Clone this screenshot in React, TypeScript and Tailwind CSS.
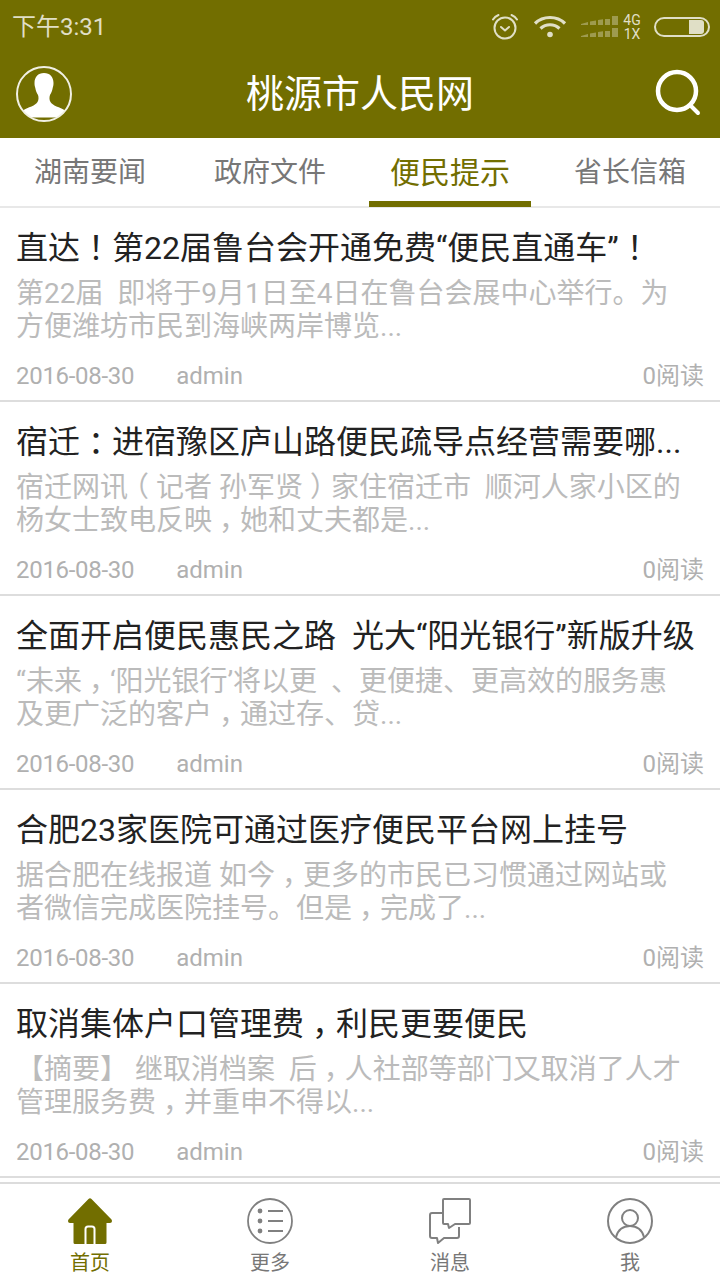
import React from "react";

type Article = {
  title: string;
  lines: string[];
};

const ARTICLES: Article[] = [
  {
    title: "直达！第22届鲁台会开通免费“便民直通车”！",
    lines: ["第22届  即将于9月1日至4日在鲁台会展中心举行。为", "方便潍坊市民到海峡两岸博览..."],
  },
  {
    title: "宿迁：进宿豫区庐山路便民疏导点经营需要哪...",
    lines: ["宿迁网讯（记者 孙军贤）家住宿迁市  顺河人家小区的", "杨女士致电反映，她和丈夫都是..."],
  },
  {
    title: "全面开启便民惠民之路  光大“阳光银行”新版升级",
    lines: ["“未来，‘阳光银行’将以更  、更便捷、更高效的服务惠", "及更广泛的客户，通过存、贷..."],
  },
  {
    title: "合肥23家医院可通过医疗便民平台网上挂号",
    lines: ["据合肥在线报道 如今，更多的市民已习惯通过网站或", "者微信完成医院挂号。但是，完成了..."],
  },
  {
    title: "取消集体户口管理费，利民更要便民",
    lines: ["【摘要】 继取消档案  后，人社部等部门又取消了人才", "管理服务费，并重申不得以..."],
  },
];

const TABS = ["湖南要闻", "政府文件", "便民提示", "省长信箱"];

// the reference centres this punctuation in its cell, the installed font does not
const Punctuated = ({ text }: { text: string }) => (
  <>
    {text.split(/([！：，（）])/).map((part, i) =>
      /^[！：，（）]$/.test(part) ? (
        <span key={i} className="inline-block w-[1em] text-center [font-feature-settings:'halt']">
          {part}
        </span>
      ) : (
        part
      )
    )}
  </>
);

const StatusBar = () => (
  <div className="flex h-[54px] items-center justify-between pl-3 pr-[10px] text-[#e0dfc6]">
    <span className="text-[24px] leading-none">下午3:31</span>
    <div className="flex items-center">
      <svg width="28" height="28" viewBox="0 0 28 28" fill="none" stroke="currentColor" strokeWidth="2" strokeLinecap="round" strokeLinejoin="round">
        <circle cx="14" cy="15" r="10.5" />
        <path d="M10 14l4 3.5 4-3.5" />
        <path d="M2 6.5C3.5 4 5 3 7.5 2M26 6.5C24.500 4 23 3 20.500 2" />
      </svg>
      <svg className="ml-[14px]" width="34" height="26" viewBox="0 0 34 26" fill="none" stroke="currentColor" strokeWidth="3.2">
        <path d="M2 9.500C10 1.500 24 1.500 32 9.500" />
        <path d="M7.500 14.500C13 9.500 21 9.500 26.500 14.500" />
        <circle cx="17" cy="20.500" r="2.800" fill="currentColor" stroke="none" />
      </svg>
      <svg className="ml-[14px] opacity-40" width="37" height="24" viewBox="0 0 37 24" fill="currentColor">
        <path d="M0 9l7-2v3H0zM9 6.500l6-1V10H9zM17 5l5-.7V10h-5zM24 4h5v6h-5zM31 1h6v9h-6zM0 21l7-2v3H0zM9 18.500l6-1V22H9zM17 17l5-.7V22h-5zM24 16h5v6h-5zM31 13h6v9h-6z" />
      </svg>
      <div className="ml-[4px] flex w-[20px] flex-col items-center text-[14px] leading-[14px]">
        <span>4G</span>
        <span>1X</span>
      </div>
      <div className="ml-[12px] flex h-5 w-14 items-center justify-end rounded-full border-2 border-current pr-1">
        <div className="h-[14px] w-[15px] rounded-r-[3px] bg-current" />
      </div>
    </div>
  </div>
);

const Header = () => (
  <div className="flex h-[84px] items-center px-[15px] text-white">
    <div className="w-[58px]">
      <svg className="mb-[4px]" width="58" height="58" viewBox="0 0 58 58">
        <defs>
          <clipPath id="avatarClip">
            <circle cx="29" cy="29" r="27" />
          </clipPath>
        </defs>
        <g clipPath="url(#avatarClip)" fill="#fff">
          <path d="M29 8c-6 0-9.500 4-9.500 10 0 2 .3 3.500.8 5 .4 2.500 1.200 4.500 2.700 7 .8 2.500.7 5-.5 7-1 1.500-3 3-6 4.500-3 1-6 2-8.500 4-2 1.500-3 3-3 7h48c0-4-1-5.500-3-7-2.500-2-5.500-3-8.500-4-3-1.500-5-3-6-4.500-1.200-2-1.300-4.500-.5-7 1.500-2.500 2.300-4.500 2.700-7 .5-1.500.8-3 .8-5 0-6-3.500-10-9.500-10z" />
        </g>
        <circle cx="29" cy="29" r="27" fill="none" stroke="#f1f0e4" strokeWidth="2" />
      </svg>
    </div>
    <h1 className="mb-[4px] flex-1 text-center text-[38px] font-normal leading-none">桃源市人民网</h1>
    <div className="flex w-[58px] justify-start">
      <svg className="mb-[6px] ml-[6px]" width="52" height="52" viewBox="0 0 52 52" fill="none" stroke="#fff" strokeLinecap="round">
        <circle cx="24" cy="24" r="19" strokeWidth="4.500" />
        <path d="M38 39l7 7" strokeWidth="4" />
      </svg>
    </div>
  </div>
);

const Tabs = () => (
  <div className="grid h-[70px] grid-cols-4 border-b-2 border-[#e8e8e8]">
    {TABS.map((tab, i) => (
      <div key={tab} className="flex justify-center">
        <div
          className={
            i === 2
              ? "mb-[-1px] flex w-[162px] justify-center border-b-[6px] border-[#726e00] pt-[15px] text-[30px] leading-[40px] text-[#726e00]"
              : "flex justify-center pt-[15px] text-[28px] leading-[40px] text-[#777]"
          }
        >
          {tab}
        </div>
      </div>
    ))}
  </div>
);

const ArticleRow = ({ article }: { article: Article }) => (
  <div className="h-[194px] border-b-2 border-[#dddddd] pl-4 pr-4 pt-[20px]">
    <div className="whitespace-pre text-[32px] leading-[40px] text-[#222]">
      <Punctuated text={article.title} />
    </div>
    <div className="mt-[9px] text-[28px] leading-[33px] text-[#bbb]">
      {article.lines.map((line) => (
        <div key={line} className="whitespace-pre">
          <Punctuated text={line} />
        </div>
      ))}
    </div>
    <div className="mt-[16px] flex items-center text-[24px] leading-[34px] text-[#b0b0b0]">
      <span className="tracking-[-0.3px]">2016-08-30</span>
      <span className="ml-[42px]">admin</span>
      <span className="ml-auto">0阅读</span>
    </div>
  </div>
);

const NavItem = ({ label, active, children }: { label: string; active?: boolean; children: React.ReactNode }) => (
  <div className="flex flex-col items-center pt-[14px]">
    <div className="flex h-[46px] items-center">{children}</div>
    <span className={active ? "mt-[7px] text-[20px] leading-[24px] text-[#726e00]" : "mt-[7px] text-[20px] leading-[24px] text-[#777]"}>
      {label}
    </span>
  </div>
);

const BottomNav = () => (
  <div className="absolute bottom-0 left-0 grid h-[98px] w-full grid-cols-4 border-t-2 border-[#dcdcdc] bg-white">
    <NavItem label="首页" active>
      <svg width="46" height="46" viewBox="0 0 46 46" fill="#726e00">
        <path d="M21.500 1a2 2 0 0 1 3 0L44.500 21.500C45.500 23 44.800 25 43 25H39.500V44.500A1.500 1.500 0 0 1 38 46H8A1.500 1.500 0 0 1 6.500 44.500V25H3C1.200 25 .5 23 1.500 21.500z" />
        <path d="M18.500 46V31a2.500 2.500 0 0 1 2.500-2.500h4a2.500 2.500 0 0 1 2.500 2.500V46" fill="none" stroke="#fff" strokeWidth="2" />
      </svg>
    </NavItem>
    <NavItem label="更多">
      <svg width="46" height="46" viewBox="0 0 46 46" fill="none" stroke="#808080" strokeWidth="1.800">
        <circle cx="23" cy="23" r="22" />
        <path d="M21 13h15M21 23h15M21 33h15" />
        <circle cx="13" cy="13" r="1.500" fill="#808080" />
        <circle cx="13" cy="23" r="1.500" fill="#808080" />
        <circle cx="13" cy="33" r="1.500" fill="#808080" />
      </svg>
    </NavItem>
    <NavItem label="消息">
      <svg width="42" height="46" viewBox="0 0 42 46" fill="none" stroke="#808080" strokeWidth="2" strokeLinejoin="round">
        <path d="M15 1h25a1 1 0 0 1 1 1v23a1 1 0 0 1-1 1H26l-6 4-1-4h-4a1 1 0 0 1-1-1V2a1 1 0 0 1 1-1z" />
        <path d="M14 15H3a2 2 0 0 0-2 2v21a2 2 0 0 0 2 2h5l1 5 6-5h13a2 2 0 0 0 2-2v-9" />
      </svg>
    </NavItem>
    <NavItem label="我">
      <svg width="46" height="46" viewBox="0 0 46 46" fill="none" stroke="#808080" strokeWidth="2">
        <circle cx="23" cy="23" r="22" />
        <circle cx="23" cy="20" r="8" />
        <path d="M9 39c2-7 7-11 14-11s12 4 14 11" />
      </svg>
    </NavItem>
  </div>
);

export default function App() {
  return (
    <div className="relative h-[1280px] w-[720px] overflow-hidden bg-white font-['Roboto','Noto_Sans_CJK_SC',sans-serif]">
      <div className="bg-[#726e00]">
        <StatusBar />
        <Header />
      </div>
      <Tabs />
      {ARTICLES.map((article) => (
        <ArticleRow key={article.title} article={article} />
      ))}
      <BottomNav />
    </div>
  );
}
